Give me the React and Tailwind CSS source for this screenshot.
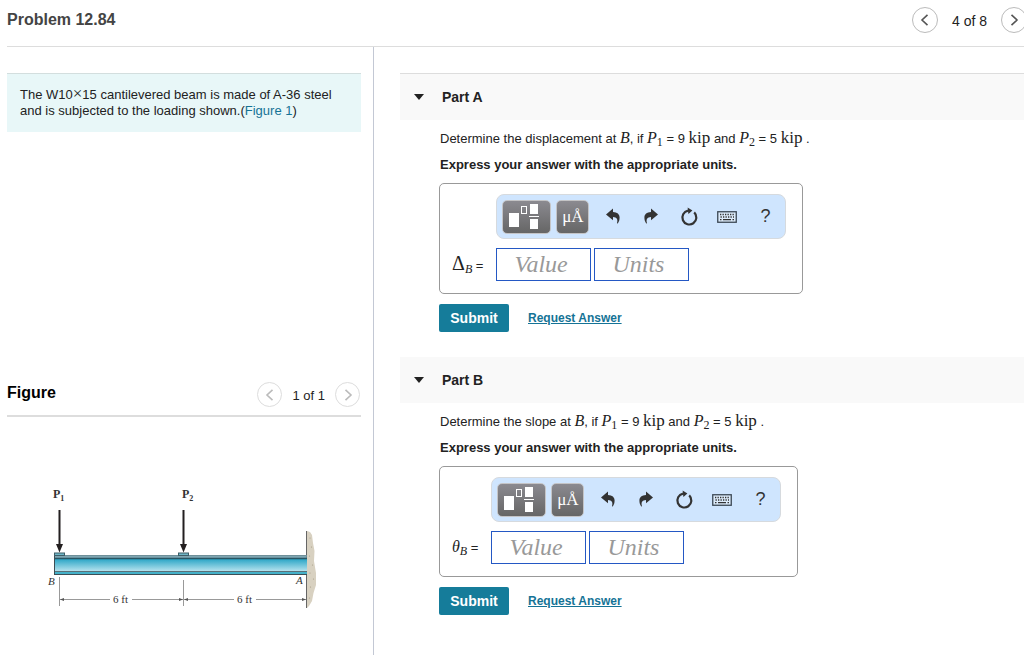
import { useState } from 'react'

const SERIF = "font-['Liberation_Serif',serif]"

function ChevronIcon({ direction }) {
  return (
    <svg width="10" height="12" viewBox="0 0 10 12" fill="none" stroke="currentColor" strokeWidth="1.6">
      <path d={direction === 'left' ? 'M7.5 0.8 L2 6 L7.5 11.2' : 'M2.5 0.8 L8 6 L2.5 11.2'} />
    </svg>
  )
}

function PagerButton({ direction, label, className }) {
  return (
    <button type="button" aria-label={label} className={`flex shrink-0 items-center justify-center rounded-full border ${className}`}>
      <ChevronIcon direction={direction} />
    </button>
  )
}

/* Italic math symbol with an optional subscript */
function MathVar({ name, sub }) {
  return (
    <span className="font-['Liberation_Serif',serif] text-[16px] italic leading-none">
      {name}
      {sub && <sub className="text-[12px] not-italic">{sub}</sub>}
    </span>
  )
}

function Kip() {
  return <span className="font-['Liberation_Serif',serif] text-[17px] leading-none">kip</span>
}

function TemplatesIcon() {
  return (
    <svg width="32" height="26" viewBox="0 0 32 26">
      <rect x="1" y="9" width="10" height="14" fill="#fff" />
      <rect x="13.5" y="2.5" width="5" height="7" fill="none" stroke="#fff" />
      <rect x="22" y="0" width="8" height="10" fill="#fff" />
      <rect x="21" y="12" width="10" height="1" fill="#fff" />
      <rect x="22" y="15" width="8" height="10" fill="#fff" />
    </svg>
  )
}

function UndoIcon() {
  return (
    <svg width="14" height="18" viewBox="0 0 14 18" fill="#333">
      <path d="M0 6.4 L7 0.6 V4 C11.2 4.2 13.6 6.2 13.6 9.6 C13.6 12 13 13.8 11.8 15.4 L11 15.2 C12.2 11.4 10.8 9.2 7 9 V12.2 Z" />
    </svg>
  )
}

function RedoIcon() {
  return (
    <svg width="14" height="18" viewBox="0 0 14 18" fill="#333">
      <path d="M14 6.4 L7 0.6 V4 C2.8 4.2 0.4 6.2 0.4 9.6 C0.4 12 1 13.8 2.2 15.4 L3 15.2 C1.8 11.4 3.2 9.2 7 9 V12.2 Z" />
    </svg>
  )
}

function ResetIcon() {
  return (
    <svg width="18" height="20" viewBox="0 0 18 20">
      <path d="M14.2 5.4 A7 7 0 1 1 8 3.6" fill="none" stroke="#333" strokeWidth="2.2" />
      <path d="M7.6 0.6 L12.4 3.4 L8.4 7 Z" fill="#333" />
    </svg>
  )
}

function KeyboardIcon() {
  return (
    <svg width="20" height="12" viewBox="0 0 20 12">
      <rect x="0.75" y="0.75" width="18.5" height="10.5" fill="#dcebfb" stroke="#3b4754" strokeWidth="1.3" />
      <path d="M3 3.5 H17.5" stroke="#333" strokeWidth="1.3" strokeDasharray="1.3 1.2" />
      <path d="M3.5 6 H17" stroke="#333" strokeWidth="1.3" strokeDasharray="1.3 1.2" />
      <path d="M3 8.6 H4.5 M6 8.6 H14 M15.5 8.6 H17" stroke="#333" strokeWidth="1.3" />
    </svg>
  )
}

function ToolButton({ label, children }) {
  return (
    <button type="button" aria-label={label} className="flex h-[33px] w-[38px] items-center justify-center text-[#333]">
      {children}
    </button>
  )
}

const KEY_BUTTON =
  'mr-[5px] flex h-[34px] items-center justify-center rounded-[5px] border border-[#c4c4c6] bg-linear-to-b from-[#8b8a90] to-[#666] text-white'

function Toolbar() {
  return (
    <div className="flex h-[45px] w-[290px] items-center rounded-lg border border-[#d6dade] bg-[#cfe5fe] pl-[5px]">
      <button type="button" aria-label="Templates" className={`w-[49px] pr-[5px] ${KEY_BUTTON}`}>
        <TemplatesIcon />
      </button>
      <button type="button" aria-label="Symbols" className={`w-[33px] text-[17px] ${SERIF} ${KEY_BUTTON}`}>
        μÅ
      </button>
      <ToolButton label="Undo"><UndoIcon /></ToolButton>
      <ToolButton label="Redo"><RedoIcon /></ToolButton>
      <ToolButton label="Reset"><ResetIcon /></ToolButton>
      <ToolButton label="Keyboard shortcuts"><KeyboardIcon /></ToolButton>
      <ToolButton label="Help"><span className="text-[18px]">?</span></ToolButton>
    </div>
  )
}

const FIELD =
  "h-[33px] w-[95px] border border-[#2458c4] bg-white pl-[17px] font-['Liberation_Serif',serif] text-[24px] italic leading-none outline-none placeholder:text-[#999]"

function AnswerBox({ id, symbol, symbolClass }) {
  const [value, setValue] = useState('')
  const [units, setUnits] = useState('')

  return (
    <div className="grid w-fit grid-cols-[auto_auto] items-center gap-x-[13px] gap-y-[9px] rounded-[5px] border border-[#999] pt-[10px] pr-4 pb-3 pl-3">
      <div className="col-start-2">
        <Toolbar />
      </div>
      <label htmlFor={`${id}-value`} className="text-[13px] leading-5 whitespace-nowrap">
        <span className={`leading-none ${SERIF} ${symbolClass}`}>{symbol}</span>
        <sub className={`text-[12px] italic ${SERIF}`}>B</sub> =
      </label>
      <div className="flex gap-[3px]">
        <input id={`${id}-value`} type="text" placeholder="Value" value={value} onChange={(e) => setValue(e.target.value)} className={FIELD} />
        <input aria-label="Units" type="text" placeholder="Units" value={units} onChange={(e) => setUnits(e.target.value)} className={FIELD} />
      </div>
    </div>
  )
}

function Part({ id, title, quantity, symbol, symbolClass, headerClass }) {
  return (
    <section className="mb-[25px]">
      <button
        type="button"
        className={`flex w-full items-center gap-[18px] bg-[#f9f9f9] pl-[14px] text-[14px] font-bold text-[#222] ${headerClass}`}
      >
        <svg width="10" height="6" viewBox="0 0 10 6" fill="#222"><path d="M0 0 H10 L5 6 Z" /></svg>
        {title}
      </button>
      <div className="pt-[9px] pl-[39px]">
        <div className="pl-px text-[13px] leading-5">
          <p>
            Determine the {quantity} at <MathVar name="B" />, if <MathVar name="P" sub="1" /> = 9 <Kip /> and{' '}
            <MathVar name="P" sub="2" /> = 5 <Kip /> .
          </p>
          <p className="mt-[6px] mb-2 font-bold">Express your answer with the appropriate units.</p>
        </div>
        <AnswerBox id={id} symbol={symbol} symbolClass={symbolClass} />
        <div className="mt-[10px] flex items-center gap-[19px]">
          <button type="submit" className="h-7 w-[70px] rounded-[2px] bg-[#157c9a] text-[14px] font-bold text-white">Submit</button>
          <a href="#answer" className="text-[12px] leading-4 font-bold text-[#157396] underline">Request Answer</a>
        </div>
      </div>
    </section>
  )
}

function BeamFigure() {
  return (
    <svg width="290" height="135" viewBox="0 0 290 135" role="img" aria-label="Cantilevered beam with loads P1 and P2">
      <defs>
        <linearGradient id="web" x1="0" y1="0" x2="0" y2="1">
          <stop offset="0" stopColor="#1fa0c2" />
          <stop offset="1" stopColor="#b4e2ee" />
        </linearGradient>
      </defs>

      {/* wall */}
      <path d="M267 50 L270 51 L272 54 L273 62 L274.5 70 L274 80 L276 92 L276 104 L273.5 112 L272 120 L269 125 L267 127 Z" fill="#d8d1c1" />
      <g fill="#a79d89">
        <circle cx="270" cy="57" r="0.6" />
        <circle cx="271.5" cy="66" r="0.6" />
        <circle cx="269.5" cy="75" r="0.6" />
        <circle cx="272.5" cy="84" r="0.6" />
        <circle cx="270" cy="92" r="0.6" />
        <circle cx="273.5" cy="98" r="0.6" />
        <circle cx="270.5" cy="106" r="0.6" />
        <circle cx="269.5" cy="117" r="0.6" />
      </g>
      <path d="M266.5 50 V127" stroke="#666" />

      {/* beam */}
      <rect x="14.5" y="74.5" width="252" height="3" fill="#7fa6b2" stroke="#6f8f99" />
      <rect x="14" y="77" width="253" height="13" fill="url(#web)" />
      <path d="M14 77.5 H267" stroke="#285563" strokeWidth="1.5" />
      <path d="M14 90.5 H267" stroke="#5c6f77" />
      <rect x="14" y="91" width="253" height="2" fill="#44b1c9" />
      <path d="M14 93.5 H267" stroke="#3d4e55" />
      <path d="M14.5 74 V94" stroke="#3d4e55" />

      {/* bearing plates and loads */}
      <rect x="14.5" y="72" width="10" height="2.5" fill="#6fb6c7" stroke="#3d5d67" />
      <rect x="138.5" y="72" width="10" height="2.5" fill="#6fb6c7" stroke="#3d5d67" />
      <g fill="#231f20">
        <path d="M18.5 29 H20.5 V63 H23 L19.5 71.5 L16 63 H18.5 Z" />
        <path d="M142.5 29 H144.5 V63 H147 L143.5 71.5 L140 63 H142.5 Z" />
      </g>

      {/* dimensions */}
      <g stroke="#999">
        <path d="M19.5 96 V125 M143.5 99 V125" />
        <path d="M20 118.5 H70 M92 118.5 H194 M216 118.5 H266" />
      </g>
      <g fill="#555">
        <path d="M20 118.5 L24 117 V120 Z M143 118.5 L139 117 V120 Z M144 118.5 L148 117 V120 Z M266 118.5 L262 117 V120 Z" />
      </g>

      <g className="font-['Liberation_Serif',serif]" fill="#333">
        <text x="13" y="17" fontSize="12" fontWeight="bold">P<tspan fontSize="8" dy="3">1</tspan></text>
        <text x="142" y="17" fontSize="12" fontWeight="bold">P<tspan fontSize="8" dy="3">2</tspan></text>
        <text x="8" y="104" fontSize="11" fontStyle="italic">B</text>
        <text x="256" y="103" fontSize="11" fontStyle="italic">A</text>
        <text x="73" y="122" fontSize="11">6 ft</text>
        <text x="197" y="122" fontSize="11">6 ft</text>
      </g>
    </svg>
  )
}

export default function App() {
  return (
    <div className="flex min-h-screen flex-col overflow-hidden bg-white font-['Liberation_Sans',Arial,sans-serif] text-[#222]">
      <header className="ml-[7px] flex h-[47px] items-start justify-between border-b border-[#ddd] pt-[7px]">
        <h1 className="pt-px text-[16px] leading-6 font-bold text-[#444]">Problem 12.84</h1>
        <nav className="-mr-[3px] flex items-center gap-[14px] text-[14px] text-[#222]">
          <PagerButton direction="left" label="Previous problem" className="size-[26px] border-[#bbb] text-[#555]" />
          <span className="pt-[2px]">4 of 8</span>
          <PagerButton direction="right" label="Next problem" className="size-[26px] border-[#bbb] text-[#555]" />
        </nav>
      </header>

      <div className="flex flex-1">
        <aside className="w-[374px] shrink-0 border-r border-[#c3c8d4] pt-[26px] pr-[12px] pl-[7px]">
          <p className="border-t border-[#d3dede] bg-[#e8f7f8] px-[13px] pt-[13px] pb-[13px] text-[13px] leading-4">
            The W10<span className={`text-[17px] leading-[0] ${SERIF}`}>×</span>15 cantilevered beam is made of A-36 steel and is subjected to the loading shown.(
            <a href="#figure" className="text-[#157396]">Figure 1</a>)
          </p>

          <section id="figure" className="mt-[248px]">
            <div className="flex items-start justify-between border-b-2 border-[#ddd] pb-[7px]">
              <h2 className="pt-px text-[16px] leading-6 font-bold text-black">Figure</h2>
              <div className="flex items-center gap-[10px] pt-[2px] pr-px pb-px text-[13px]">
                <PagerButton direction="left" label="Previous figure" className="size-[25px] border-[#ddd] text-[#bbb]" />
                <span className="pt-[2px]">1 of 1</span>
                <PagerButton direction="right" label="Next figure" className="size-[25px] border-[#ddd] text-[#bbb]" />
              </div>
            </div>
            <div className="pt-16 pl-[33px]">
              <BeamFigure />
            </div>
          </section>
        </aside>

        <main className="min-w-0 flex-1 pt-[26px] pl-[26px]">
          <Part
            id="part-a"
            title="Part A"
            quantity="displacement"
            symbol="Δ"
            symbolClass="text-[20px]"
            headerClass="h-[47px] border-t border-[#ddd]"
          />
          <Part id="part-b" title="Part B" quantity="slope" symbol="θ" symbolClass="text-[16px] italic" headerClass="h-[46px]" />
        </main>
      </div>
    </div>
  )
}
